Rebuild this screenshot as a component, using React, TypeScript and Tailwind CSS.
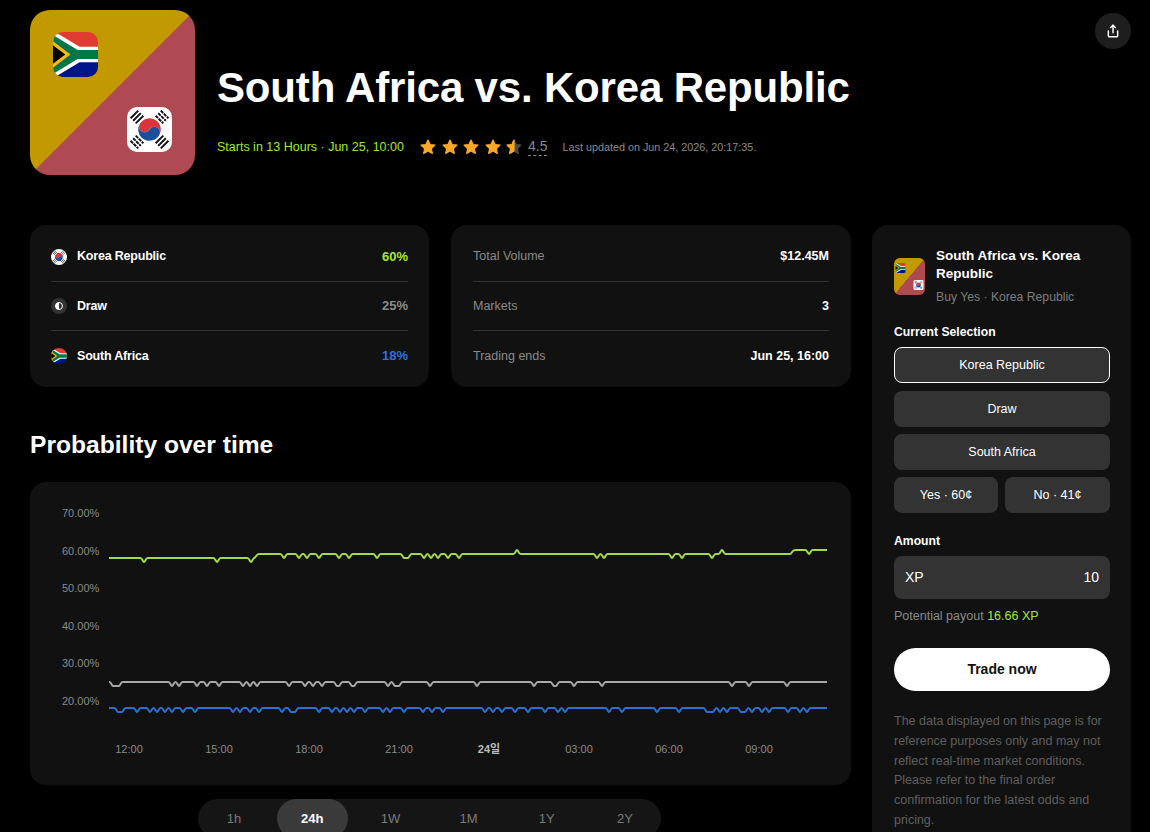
import React from "react";
import { Share } from "lucide-react";

type Dip = number | [number, number] | [number, number, number];

const ZaFlag = () => (
  <svg viewBox="0 0 44 44" className="block h-full w-full">
    <rect width="44" height="22" fill="#e03c31" />
    <rect y="22" width="44" height="22" fill="#001489" />
    <path d="M2 0 L26 14.5 L44 14.5 L44 29.5 L26 29.5 L2 44 L0 44 L0 0 Z" fill="#fff" />
    <path d="M0 3 L24 17.5 L44 17.5 L44 26.5 L24 26.5 L0 41 Z" fill="#007749" />
    <path d="M0 9 L17 22 L0 35 Z" fill="#ffb81c" />
    <path d="M0 13 L12 22 L0 31 Z" fill="#000" />
  </svg>
);

const KrFlag = () => (
  <svg viewBox="0 0 44 44" className="block h-full w-full">
    <rect width="44" height="44" fill="#fff" />
    <g transform="rotate(30 22 22)">
      <path d="M11 22 A11 11 0 0 1 33 22 A5.5 5.5 0 0 0 22 22 A5.5 5.5 0 0 1 11 22 Z" fill="#d8363a" />
      <path d="M11 22 A5.5 5.5 0 0 0 22 22 A5.5 5.5 0 0 1 33 22 A11 11 0 0 1 11 22 Z" fill="#1b4f9c" />
    </g>
    <g stroke="#111" strokeWidth="1.9">
      <path d="M3.5 11 L11 3.5 M6 13.5 L13.5 6 M8.5 16 L16 8.5" />
      <path d="M33 3.5 L40.5 11 M30.5 6 L38 13.5 M28 8.5 L35.5 16" strokeDasharray="3.4 0.8" />
      <path d="M3.5 33 L11 40.5 M6 30.5 L13.5 38 M8.5 28 L16 35.5" strokeDasharray="3.4 0.8" />
      <path d="M28 35.5 L35.5 28 M30.5 38 L38 30.5 M33 40.5 L40.5 33" />
    </g>
  </svg>
);

const MatchIcon = ({ small }: { small?: boolean }) => (
  <div
    className={
      small
        ? "relative h-[37px] w-[31px] shrink-0 rounded-[6px] bg-[linear-gradient(to_bottom_right,#c29a00_49.7%,#af4a52_50.3%)]"
        : "relative h-[165px] w-[165px] shrink-0 rounded-[20px] bg-[linear-gradient(to_bottom_right,#c29a00_49.8%,#af4a52_50.2%)]"
    }
  >
    <div className={small ? "absolute left-[1px] top-[5px] h-[10px] w-[11px] overflow-hidden rounded-[2px]" : "absolute left-[23px] top-[22px] h-[45px] w-[45px] overflow-hidden rounded-[10px]"}>
      <ZaFlag />
    </div>
    <div className={small ? "absolute bottom-[5px] right-[1px] h-[10px] w-[11px] overflow-hidden rounded-[2px]" : "absolute bottom-[23px] right-[23px] h-[45px] w-[45px] overflow-hidden rounded-[10px]"}>
      <KrFlag />
    </div>
  </div>
);

const StarGlyph = ({ half }: { half?: boolean }) => {
  const d = "M8 1 L10.1 5.5 L15 6.1 L11.4 9.5 L12.3 14.4 L8 12 L3.7 14.4 L4.6 9.5 L1 6.1 L5.9 5.5 Z";
  return (
    <svg viewBox="0 0 16 16" className="h-4 w-4">
      <path d={d} fill={half ? "#4a4a4a" : "#f9a825"} stroke={half ? "#4a4a4a" : "#f9a825"} strokeWidth="1.2" strokeLinejoin="round" />
      {half && <path d="M8 1 L5.9 5.5 L1 6.1 L4.6 9.5 L3.7 14.4 L8 12 Z" fill="#f9a825" stroke="#f9a825" strokeWidth="1.2" strokeLinejoin="round" />}
    </svg>
  );
};

const DrawIcon = () => (
  <div className="flex h-4 w-4 items-center justify-center rounded-full bg-[#333]">
    <svg viewBox="0 0 8 8" className="h-2 w-2">
      <circle cx="4" cy="4" r="3.5" fill="none" stroke="#fff" strokeWidth="1" />
      <path d="M4 0.5 A3.5 3.5 0 0 0 4 7.5 Z" fill="#fff" />
    </svg>
  </div>
);

const outcomes = [
  { name: "Korea Republic", pct: "60%", color: "text-[#a3e635]", icon: <div className="h-4 w-4 overflow-hidden rounded-full"><KrFlag /></div> },
  { name: "Draw", pct: "25%", color: "text-[#8a8a8a]", icon: <DrawIcon /> },
  { name: "South Africa", pct: "18%", color: "text-[#2f6fe0]", icon: <div className="h-4 w-4 overflow-hidden rounded-full"><ZaFlag /></div> },
];

const facts = [
  { label: "Total Volume", value: "$12.45M" },
  { label: "Markets", value: "3" },
  { label: "Trading ends", value: "Jun 25, 16:00" },
];

// build a flat line with small rounded dips, coordinates are the chart's own
const linePath = (start: number, end: number, segments: { to: number; y: number }[], dips: Dip[]) => {
  let out = "";
  let from = start;
  segments.forEach((seg, i) => {
    const list = dips.filter((d) => {
      const x = Array.isArray(d) ? d[0] : d;
      return x >= from && x < seg.to;
    });
    if (i === 0) out += `M${from} ${seg.y}`;
    else out += ` L${from} ${segments[i - 1].y} C${from + 2} ${segments[i - 1].y} ${from + 2} ${seg.y} ${from + 5} ${seg.y}`;
    list.forEach((d) => {
      const x = Array.isArray(d) ? d[0] : d;
      const w = Array.isArray(d) ? d[1] : 0;
      const dir = Array.isArray(d) && d.length > 2 ? d[2]! : 1;
      const y = seg.y;
      const low = y + 4 * dir;
      out += ` L${x - w - 3.5} ${y} C${x - w - 2} ${y} ${x - w - 1} ${low} ${x - w} ${low}`;
      if (w > 0) out += ` L${x + w} ${low}`;
      out += ` C${x + w + 1} ${low} ${x + w + 2} ${y} ${x + w + 3.5} ${y}`;
    });
    from = seg.to;
  });
  out += ` L${end} ${segments[segments.length - 1].y}`;
  return out;
};

const greenLine = linePath(
  109,
  827,
  [
    { to: 254, y: 76 },
    { to: 790, y: 72 },
    { to: 828, y: 68 },
  ],
  [144, 217, 251, 284, 299, 307, 319, 339, 349, 377, [406, 2], 424, 431, 438, 448, 459, [517, 0, -1], 597, 604, 672, 682, 712, [722, 0, -1], 809]
);
const grayLine = linePath(
  109,
  827,
  [{ to: 828, y: 200 }],
  [[116, 3], 172, 179, 197, 207, 219, 243, 250, 257, 289, 305, 313, 322, [338, 1], [353, 1], 388, [397, 2], 430, 477, 534, [555, 1], 574, 602, 732, 749, 787]
);
const blueLine = linePath(
  109,
  827,
  [{ to: 828, y: 226 }],
  [[120, 2], 137, 150, 157, 165, 172, 183, 195, 233, 240, 250, 259, 282, [293, 2], 319, 332, 340, 347, 354, 365, 383, 390, 404, 423, 432, 443, 485, 493, 502, 515, 528, 545, 558, 565, 609, 622, 657, 679, [710, 3], 720, 727, [743, 2], 752, 762, 769, 788, 800, 807]
);

const yTicks = [
  { label: "70.00%", y: 31 },
  { label: "60.00%", y: 69 },
  { label: "50.00%", y: 106 },
  { label: "40.00%", y: 144 },
  { label: "30.00%", y: 181 },
  { label: "20.00%", y: 219 },
];
const xTicks = ["12:00", "15:00", "18:00", "21:00", "24일", "03:00", "06:00", "09:00"];
const ranges = ["1h", "24h", "1W", "1M", "1Y", "2Y"];

const Chart = () => (
  <div className="h-[303px] rounded-2xl bg-[#111]">
    <svg viewBox="0 0 821 303" className="block h-[303px] w-[821px]">
      <g transform="translate(-30 0)">
        {yTicks.map((t) => (
          <text key={t.label} x="62" y={t.y + 4} fontSize="11" fill="#8a8a8a">
            {t.label}
          </text>
        ))}
        {xTicks.map((t, i) => (
          <text key={t} x={129 + i * 90} y="271" fontSize="11" fill={t === "24일" ? "#bdbdbd" : "#8a8a8a"} fontWeight={t === "24일" ? 700 : 400} textAnchor="middle">
            {t}
          </text>
        ))}
        <path d={greenLine} fill="none" stroke="#a3d94f" strokeWidth="2" strokeLinejoin="round" />
        <path d={grayLine} fill="none" stroke="#a8a8a8" strokeWidth="2" strokeLinejoin="round" />
        <path d={blueLine} fill="none" stroke="#2f6fd0" strokeWidth="2" strokeLinejoin="round" />
      </g>
    </svg>
  </div>
);

export default function App() {
  return (
    <div className="relative h-[832px] w-[1150px] overflow-hidden bg-black pl-[30px] pr-[19px] font-['Liberation_Sans','Noto_Sans_CJK_KR',sans-serif] text-white">
      {/* Header */}
      <header className="relative flex h-[225px] items-start pt-[10px]">
        <MatchIcon />
        <div className="ml-[22px] pt-[51px]">
          <h1 className="text-[42px] font-bold leading-[54px] tracking-[-0.17px]">South Africa vs. Korea Republic</h1>
          <div className="mt-[20px] flex h-6 items-center">
            <span className="w-[203px] text-[12.5px] text-[#a3e635]">Starts in 13 Hours · Jun 25, 10:00</span>
            <div className="flex gap-[5.5px]">
              <StarGlyph />
              <StarGlyph />
              <StarGlyph />
              <StarGlyph />
              <StarGlyph half />
            </div>
            <span className="ml-[6px] border-b border-dashed border-[#888] text-[14px] leading-[17px] text-[#888]">4.5</span>
            <span className="ml-[15px] text-[10.8px] text-[#8a8a8a]">Last updated on Jun 24, 2026, 20:17:35.</span>
          </div>
        </div>
        <button className="absolute right-0 top-[13px] flex h-9 w-9 items-center justify-center rounded-full bg-[#1e1e1e]">
          <Share className="h-[14px] w-[14px]" strokeWidth={2.5} />
        </button>
      </header>

      <div className="flex gap-[21px]">
        {/* Left column */}
        <main className="w-[821px] shrink-0">
          <div className="flex gap-[22px]">
            <section className="flex h-[162px] w-[399px] flex-col justify-center rounded-2xl bg-[#111] px-[21px] pt-[1px]">
              {outcomes.map((o, i) => (
                <div key={o.name} className={i < 2 ? "flex h-[49.5px] items-center border-b border-[#333]" : "flex h-[49.5px] items-center"}>
                  {o.icon}
                  <span className="ml-[10px] text-[12.5px] font-bold tracking-[-0.2px]">{o.name}</span>
                  <span className={`ml-auto text-[13px] font-bold ${o.color}`}>{o.pct}</span>
                </div>
              ))}
            </section>
            <section className="flex h-[162px] w-[400px] flex-col justify-center rounded-2xl bg-[#111] px-[22px] pt-[1px]">
              {facts.map((f, i) => (
                <div key={f.label} className={i < 2 ? "flex h-[49.5px] items-center border-b border-[#333]" : "flex h-[49.5px] items-center"}>
                  <span className="text-[12.5px] text-[#8a8a8a]">{f.label}</span>
                  <span className="ml-auto text-[12.5px] font-bold">{f.value}</span>
                </div>
              ))}
            </section>
          </div>

          <h2 className="mt-[40px] text-[24.6px] font-bold leading-[36px]">Probability over time</h2>
          <div className="mt-[19px]">
            <Chart />
          </div>

          <div className="ml-[168px] mt-[14px] h-[39px] w-[463px] rounded-full bg-[#151515]">
            <div className="-mx-[3px] flex">
              {ranges.map((r) => (
                <div key={r} className="flex h-[39px] flex-1 items-center justify-center">
                  {r === "24h" ? (
                    <div className="flex h-[39px] w-[71px] items-center justify-center rounded-full bg-[#3a3a3a] text-[13px] font-bold text-white">{r}</div>
                  ) : (
                    <span className="text-[13px] text-[#7a7a7a]">{r}</span>
                  )}
                </div>
              ))}
            </div>
          </div>
        </main>

        {/* Order panel */}
        <aside className="h-[700px] w-[259px] shrink-0 rounded-2xl bg-[#111] pl-[22px] pr-[21px] pt-[22px]">
          <div className="flex items-center gap-[11px]">
            <MatchIcon small />
            <div>
              <div className="text-[13.5px] font-bold leading-[18px]">South Africa vs. Korea Republic</div>
              <div className="mt-[7px] text-[12.2px] leading-[15px] text-[#7d7d7d]">Buy Yes · Korea Republic</div>
            </div>
          </div>
          <div className="mt-[19px] text-[12.2px] font-bold leading-[16px]">Current Selection</div>
          <div className="mt-[7px] flex flex-col">
            <button className="h-9 rounded-lg border border-white bg-[#333] text-[12.5px]">Korea Republic</button>
            <button className="mt-2 h-9 rounded-lg bg-[#333] text-[12.5px]">Draw</button>
            <button className="mt-[7px] h-9 rounded-lg bg-[#333] text-[12.5px]">South Africa</button>
            <div className="mt-[7px] flex gap-[7px]">
              <button className="h-9 w-[104px] rounded-lg bg-[#333] text-[12.5px]">Yes · 60¢</button>
              <button className="h-9 w-[105px] rounded-lg bg-[#333] text-[12.5px]">No · 41¢</button>
            </div>
          </div>
          <div className="mt-[20px] text-[12.2px] font-bold leading-[16px]">Amount</div>
          <div className="mt-[7px] flex h-[43px] items-center justify-between rounded-lg bg-[#333] px-[11px] text-[14px]">
            <span>XP</span>
            <span>10</span>
          </div>
          <div className="mt-[9px] text-[12.5px] leading-[16px] text-[#8a8a8a]">
            Potential payout <span className="text-[#a3e635]">16.66 XP</span>
          </div>
          <button className="mt-[24px] h-[43px] w-full rounded-full bg-white text-[14px] font-bold text-[#111]">Trade now</button>
          <p className="mt-[21px] text-[12.5px] leading-[19.8px] text-[#5f5f5f]">
            The data displayed on this page is for reference purposes only and may not reflect real-time market conditions. Please refer to the final order confirmation for the latest odds and pricing.
          </p>
        </aside>
      </div>
    </div>
  );
}
